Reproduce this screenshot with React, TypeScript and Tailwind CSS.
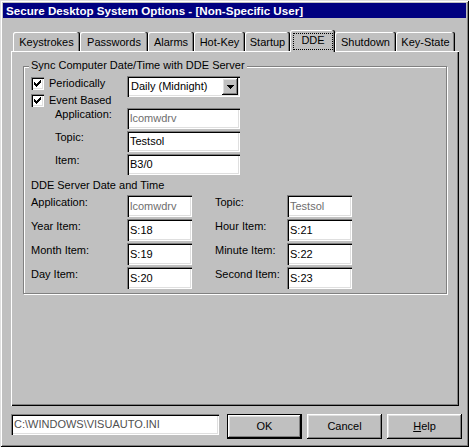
import React from "react";

const sunken =
  "shadow-[inset_1px_1px_0_#808080,inset_2px_2px_0_#000,inset_-1px_-1px_0_#fff,inset_-2px_-2px_0_#dfdfdf]";
const raised =
  "shadow-[inset_-1px_-1px_0_#000,inset_1px_1px_0_#fff,inset_-2px_-2px_0_#808080,inset_2px_2px_0_#dfdfdf]";

function CheckBox({ label }: { label: string }) {
  return (
    <div className="flex items-center h-[13px]">
      <div className={`relative w-[13px] h-[13px] bg-white ${sunken}`}>
        <svg width="13" height="13" className="absolute left-0 top-0" shapeRendering="crispEdges">
          <rect x="3" y="5" width="1" height="3" fill="#000" />
          <rect x="4" y="6" width="1" height="3" fill="#000" />
          <rect x="5" y="7" width="1" height="3" fill="#000" />
          <rect x="6" y="6" width="1" height="3" fill="#000" />
          <rect x="7" y="5" width="1" height="3" fill="#000" />
          <rect x="8" y="4" width="1" height="3" fill="#000" />
          <rect x="9" y="3" width="1" height="3" fill="#000" />
        </svg>
      </div>
      <span className="ml-[5px] whitespace-nowrap">{label}</span>
    </div>
  );
}

function Field({
  value,
  w,
  h,
  gray,
}: {
  value: string;
  w: string;
  h: string;
  gray?: boolean;
}) {
  return (
    <div
      className={`${w} ${h} bg-white ${sunken} flex items-center pl-[3px] whitespace-nowrap overflow-hidden ${
        gray ? "text-[#6e6e6e]" : "text-black"
      }`}
    >
      {value}
    </div>
  );
}

const tabs = [
  { label: "Keystrokes", w: "w-[67px]" },
  { label: "Passwords", w: "w-[68px]" },
  { label: "Alarms", w: "w-[46px]" },
  { label: "Hot-Key", w: "w-[51px]" },
  { label: "Startup", w: "w-[45px]" },
  { label: "DDE", w: "w-[45px]", active: true },
  { label: "Shutdown", w: "w-[61px]" },
  { label: "Key-State", w: "w-[59px]" },
];

export default function App() {
  return (
    <div className="w-[469px] h-[447px] bg-[#c0c0c0] p-[3px] flex flex-col font-['Liberation_Sans',Arial,sans-serif] text-[11px] leading-[13px] text-black shadow-[inset_1px_1px_0_#dfdfdf,inset_-1px_-1px_0_#000,inset_2px_2px_0_#fff,inset_-2px_-2px_0_#808080] overflow-hidden">
      {/* Title bar */}
      <div className="h-[15px] bg-[#000080] text-white font-bold text-[11.6px] flex items-center pl-[3px] whitespace-nowrap">
        Secure Desktop System Options - [Non-Specific User]
      </div>

      {/* Tabs */}
      <div className="ml-[8px] mt-[12px] w-[448px] h-[21px] flex items-end pl-[2px]">
        {tabs.map((t) =>
          t.active ? (
            <div
              key={t.label}
              className={`relative z-10 ${t.w} h-[22px] -mb-[1px] bg-[#c0c0c0] rounded-t-[2px] shadow-[inset_-1px_0_0_#000,inset_-2px_0_0_#808080,inset_1px_1px_0_#fff] flex`}
            >
              <div className="ml-[3px] mr-[2px] mt-[3px] h-[17px] flex-1 border border-dotted border-black flex justify-center">
                <span>{t.label}</span>
              </div>
            </div>
          ) : (
            <div
              key={t.label}
              className={`${t.w} h-[19px] bg-[#c0c0c0] rounded-t-[2px] shadow-[inset_-1px_0_0_#000,inset_-2px_0_0_#808080,inset_1px_1px_0_#fff] flex justify-center pt-[4px] whitespace-nowrap`}
            >
              {t.label}
            </div>
          )
        )}
      </div>

      {/* Tab panel */}
      <div className="ml-[8px] w-[448px] h-[355px] shadow-[inset_1px_1px_0_#fff,inset_-1px_-1px_0_#000,inset_-2px_-2px_0_#808080] pt-[15px] pl-[12px]">
        <div className="relative w-[424px] h-[228px] border border-[#808080] shadow-[1px_1px_0_#fff,inset_1px_1px_0_#fff] pt-[9px] pl-[7px]">
          <span className="absolute left-[5px] top-[-8px] px-[2px] bg-[#c0c0c0] whitespace-nowrap">
            Sync Computer Date/Time with DDE Server
          </span>

          {/* Checkboxes + select */}
          <div className="flex h-[32px]">
            <div className="w-[96px] flex flex-col pt-[1px] gap-[4px]">
              <CheckBox label="Periodically" />
              <CheckBox label="Event Based" />
            </div>
            <div className={`w-[113px] h-[21px] bg-white ${sunken} flex items-center p-[2px]`}>
              <span className="flex-1 pl-[2px] whitespace-nowrap">Daily (Midnight)</span>
              <div className={`w-[16px] h-[17px] bg-[#c0c0c0] ${raised} flex items-center justify-center`}>
                <svg width="7" height="4" shapeRendering="crispEdges">
                  <rect x="0" y="0" width="7" height="1" fill="#000" />
                  <rect x="1" y="1" width="5" height="1" fill="#000" />
                  <rect x="2" y="2" width="3" height="1" fill="#000" />
                  <rect x="3" y="3" width="1" height="1" fill="#000" />
                </svg>
              </div>
            </div>
          </div>

          {/* Event based fields */}
          <div className="flex flex-col gap-[2px]">
            {[
              { l: "Application:", v: "lcomwdrv", g: true },
              { l: "Topic:", v: "Testsol", g: false },
              { l: "Item:", v: "B3/0", g: false },
            ].map((r) => (
              <div key={r.l} className="flex h-[21px]">
                <div className="w-[96px] pl-[24px]">{r.l}</div>
                <Field value={r.v} w="w-[113px]" h="h-[21px]" gray={r.g} />
              </div>
            ))}
          </div>

          <div className="mt-[4px] h-[13px]">DDE Server Date and Time</div>

          <div className="mt-[3px] flex flex-col gap-[2px]">
            {[
              { l: "Application:", v: "lcomwdrv", g: true, l2: "Topic:", v2: "Testsol", g2: true },
              { l: "Year Item:", v: "S:18", l2: "Hour Item:", v2: "S:21" },
              { l: "Month Item:", v: "S:19", l2: "Minute Item:", v2: "S:22" },
              { l: "Day Item:", v: "S:20", l2: "Second Item:", v2: "S:23" },
            ].map((r) => (
              <div key={r.l} className="flex h-[22px]">
                <div className="w-[96px] pt-[1px] whitespace-nowrap">{r.l}</div>
                <Field value={r.v} w="w-[65px]" h="h-[22px]" gray={r.g} />
                <div className="ml-[23px] w-[72px] pt-[1px] whitespace-nowrap">{r.l2}</div>
                <Field value={r.v2} w="w-[65px]" h="h-[22px]" gray={r.g2} />
              </div>
            ))}
          </div>
        </div>
      </div>

      {/* Bottom row */}
      <div className="ml-[8px] mt-[8px] flex items-start">
        <div className={`w-[208px] h-[21px] bg-white ${sunken} flex items-center pl-[3px] text-[#505050] whitespace-nowrap`}>
          C:\WINDOWS\VISUAUTO.INI
        </div>
        <button className="ml-[8px] w-[75px] h-[25px] bg-[#c0c0c0] border border-black shadow-[inset_-1px_-1px_0_#000,inset_1px_1px_0_#fff,inset_-2px_-2px_0_#808080,inset_2px_2px_0_#dfdfdf] flex items-center justify-center">
          OK
        </button>
        <button className={`ml-[5px] w-[75px] h-[25px] bg-[#c0c0c0] ${raised} flex items-center justify-center`}>
          Cancel
        </button>
        <button className={`ml-[5px] w-[75px] h-[25px] bg-[#c0c0c0] ${raised} flex items-center justify-center`}>
          <span>
            <span className="underline">H</span>elp
          </span>
        </button>
      </div>
    </div>
  );
}
